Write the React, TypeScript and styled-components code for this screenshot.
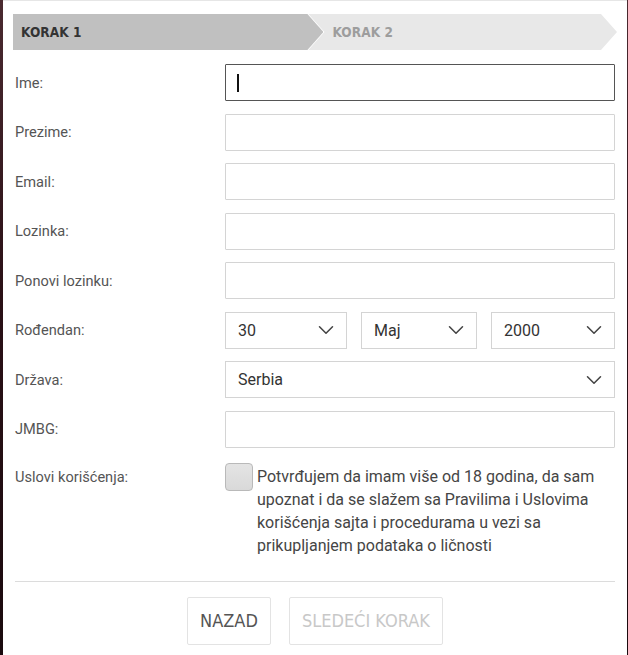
import React from "react";
import styled, { createGlobalStyle } from "styled-components";
import { ChevronDown } from "lucide-react";

const GlobalStyle = createGlobalStyle`
  html, body {
    margin: 0;
    padding: 0;
    background: #2b1419;
  }
  body {
    font-family: Roboto, "Noto Sans", sans-serif;
  }
  * { box-sizing: border-box; }
`;

const Backdrop = styled.div`
  width: 628px;
  height: 655px;
  padding: 0 1px 0 3px;
  background: linear-gradient(180deg, #4a2a30 0%, #2a1016 45%, #1a0a0e 100%);
`;

const Modal = styled.div`
  height: 100%;
  background: #ffffff;
  border-top: 1px solid #e6e6e6;
  padding: 13px 10px 0 10px;
  display: flex;
  flex-direction: column;
`;

const Stepper = styled.div`
  display: flex;
  height: 36px;
`;

const Step = styled.div<{ $active?: boolean; $first?: boolean }>`
  display: flex;
  align-items: center;
  height: 100%;
  font-family: "DejaVu Sans Condensed", "Liberation Sans Narrow", Roboto, sans-serif;
  font-stretch: condensed;
  font-weight: 700;
  font-size: 13.5px;
  letter-spacing: 0.1px;
  background: ${(p) => (p.$active ? "#c0c0c0" : "#e8e8e8")};
  color: ${(p) => (p.$active ? "#333333" : "#9d9d9d")};
  width: ${(p) => (p.$first ? "313px" : "311px")};
  margin-left: ${(p) => (p.$first ? "0" : "-15px")};
  padding-left: ${(p) => (p.$first ? "8px" : "24px")};
  clip-path: ${(p) =>
    p.$first
      ? "polygon(0 0, calc(100% - 16px) 0, 100% 50%, calc(100% - 16px) 100%, 0 100%)"
      : "polygon(0 0, calc(100% - 16px) 0, 100% 50%, calc(100% - 16px) 100%, 0 100%, 16px 50%)"};
`;

const Form = styled.div`
  display: flex;
  flex-direction: column;
  gap: 12.5px;
  margin-top: 14px;
`;

const Row = styled.div<{ $top?: boolean }>`
  display: grid;
  grid-template-columns: 210px 1fr;
  align-items: ${(p) => (p.$top ? "start" : "center")};
  padding-left: 2px;
  padding-right: 2px;
  margin-top: ${(p) => (p.$top ? "2.5px" : "0")};
`;

const Label = styled.label`
  font-size: 14.6px;
  line-height: 28px;
  color: #555555;
`;

const InputWrap = styled.div`
  position: relative;
`;

const TextInput = styled.input<{ $focused?: boolean }>`
  display: block;
  width: 100%;
  height: 37px;
  border: 1px solid ${(p) => (p.$focused ? "#555555" : "#d4d4d4")};
  border-radius: 1px;
  padding: 0 12px;
  font-family: Roboto, sans-serif;
  font-size: 16px;
  color: #333;
  outline: none;
  background: #fff;
`;

const Caret = styled.span`
  position: absolute;
  left: 12px;
  top: 10px;
  width: 2px;
  height: 18px;
  background: #111;
`;

const SelectGroup = styled.div`
  display: grid;
  grid-template-columns: 122px 116px 1fr;
  gap: 14px;
`;

const SelectBox = styled.div`
  display: flex;
  align-items: center;
  justify-content: space-between;
  height: 37px;
  border: 1px solid #d4d4d4;
  padding: 0 7px 0 12px;
  font-size: 16px;
  color: #333;
  background: #fff;
  svg {
    color: #444;
  }
`;

const Terms = styled.div`
  display: flex;
  align-items: flex-start;
  gap: 4px;
`;

const Checkbox = styled.span`
  flex: none;
  width: 28px;
  height: 28px;
  border-radius: 4px;
  border: 1px solid #b9b9b9;
  background: linear-gradient(180deg, #e4e4e4, #d9d9d9);
`;

const TermsText = styled.p`
  margin: 2px 0 0;
  font-size: 16px;
  line-height: 23px;
  color: #454545;
`;

const Divider = styled.hr`
  margin: 24px 2px 0 2px;
  border: 0;
  border-top: 1px solid #dcdcdc;
`;

const Actions = styled.div`
  display: flex;
  justify-content: center;
  gap: 18px;
  margin-top: 15px;
`;

const ActionButton = styled.button<{ $disabled?: boolean }>`
  height: 48px;
  padding: 0 12px;
  background: #fff;
  border: 1px solid #e3e3e3;
  border-radius: 2px;
  font-family: "DejaVu Sans Condensed", "Liberation Sans Narrow", Roboto, sans-serif;
  font-stretch: condensed;
  font-size: 18px;
  color: ${(p) => (p.$disabled ? "#c8c8c8" : "#555555")};
`;

function Select({ value }: { value: string }) {
  return (
    <SelectBox role="combobox">
      <span>{value}</span>
      <ChevronDown size={26} strokeWidth={1.4} />
    </SelectBox>
  );
}

const fields = ["Prezime:", "Email:", "Lozinka:", "Ponovi lozinku:"];

export default function App() {
  return (
    <>
      <GlobalStyle />
      <Backdrop>
        <Modal>
          <Stepper>
            <Step $active $first>KORAK 1</Step>
            <Step>KORAK 2</Step>
          </Stepper>

          <Form>
            <Row>
              <Label>Ime:</Label>
              <InputWrap>
                <TextInput $focused type="text" />
                <Caret />
              </InputWrap>
            </Row>
            {fields.map((f) => (
              <Row key={f}>
                <Label>{f}</Label>
                <TextInput type={f.includes("ozink") ? "password" : "text"} />
              </Row>
            ))}
            <Row>
              <Label>Rođendan:</Label>
              <SelectGroup>
                <Select value="30" />
                <Select value="Maj" />
                <Select value="2000" />
              </SelectGroup>
            </Row>
            <Row>
              <Label>Država:</Label>
              <Select value="Serbia" />
            </Row>
            <Row>
              <Label>JMBG:</Label>
              <TextInput type="text" />
            </Row>
            <Row $top>
              <Label>Uslovi korišćenja:</Label>
              <Terms>
                <Checkbox />
                <TermsText>
                  Potvrđujem da imam više od 18 godina, da sam upoznat i da se
                  slažem sa Pravilima i Uslovima korišćenja sajta i procedurama u
                  vezi sa prikupljanjem podataka o ličnosti
                </TermsText>
              </Terms>
            </Row>
          </Form>

          <Divider />
          <Actions>
            <ActionButton>NAZAD</ActionButton>
            <ActionButton $disabled>SLEDEĆI KORAK</ActionButton>
          </Actions>
        </Modal>
      </Backdrop>
    </>
  );
}
